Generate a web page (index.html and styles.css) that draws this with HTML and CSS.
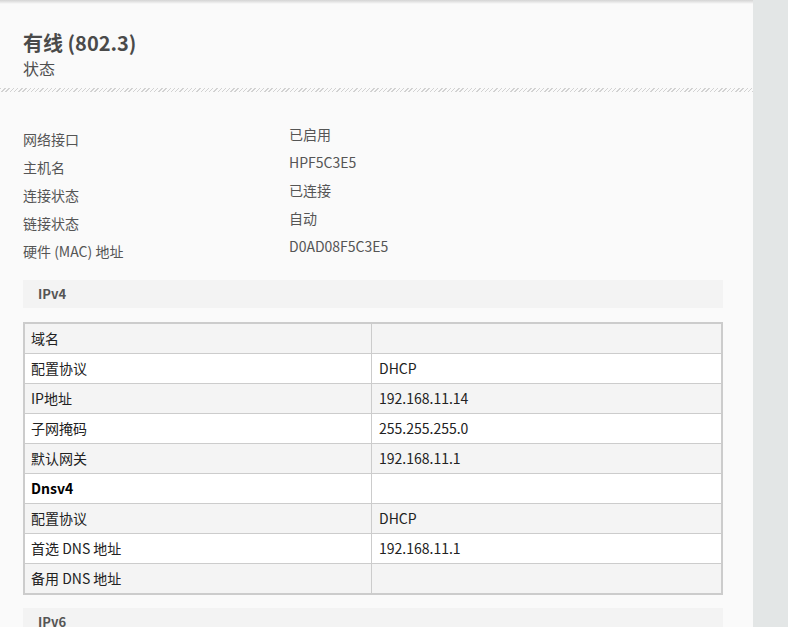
FILE: index.html
```html
<!DOCTYPE html>
<html lang="zh-CN">
<head>
<meta charset="utf-8">
<title>有线 (802.3) 状态</title>
<link rel="stylesheet" href="styles.css">
</head>
<body>
<div class="page">
  <main class="panel">
    <header class="head">
      <h1 class="title">有线 (802.3)</h1>
      <div class="subtitle">状态</div>
    </header>
    <div class="hatch"></div>
    <section class="content">
      <div class="info">
        <div class="info-label">网络接口</div><div class="info-value">已启用</div>
        <div class="info-label">主机名</div><div class="info-value">HPF5C3E5</div>
        <div class="info-label">连接状态</div><div class="info-value">已连接</div>
        <div class="info-label">链接状态</div><div class="info-value">自动</div>
        <div class="info-label">硬件 (MAC) 地址</div><div class="info-value">D0AD08F5C3E5</div>
      </div>

      <div class="bar">IPv4</div>

      <div class="grid-table">
        <div class="row"><div class="cell key">域名</div><div class="cell val"></div></div>
        <div class="row"><div class="cell key">配置协议</div><div class="cell val">DHCP</div></div>
        <div class="row"><div class="cell key">IP地址</div><div class="cell val">192.168.11.14</div></div>
        <div class="row"><div class="cell key">子网掩码</div><div class="cell val">255.255.255.0</div></div>
        <div class="row"><div class="cell key">默认网关</div><div class="cell val">192.168.11.1</div></div>
        <div class="row"><div class="cell key strong">Dnsv4</div><div class="cell val"></div></div>
        <div class="row"><div class="cell key">配置协议</div><div class="cell val">DHCP</div></div>
        <div class="row"><div class="cell key">首选 DNS 地址</div><div class="cell val">192.168.11.1</div></div>
        <div class="row"><div class="cell key">备用 DNS 地址</div><div class="cell val"></div></div>
      </div>

      <div class="bar bar-next">IPv6</div>
    </section>
  </main>
  <aside class="side"></aside>
</div>
</body>
</html>
```

FILE: styles.css
```css
html, body {
  margin: 0;
  padding: 0;
  height: 100%;
  overflow: hidden;
}

body {
  background: #e3e6e6;
  font-family: "Noto Sans CJK SC", "Noto Sans", sans-serif;
  font-size: 14px;
  color: #555;
}

.page {
  display: flex;
  height: 100%;
}

.panel {
  width: 753px;
  flex: none;
  background: #fafafa;
  background-image: linear-gradient(to bottom, #d4d4d4 0, #e6e6e6 2px, #fafafa 4px);
  background-repeat: no-repeat;
  background-size: 100% 4px;
  background-color: #fafafa;
}

.side {
  flex: 1;
  background: #e3e6e6;
}

.head {
  padding: 31px 23px 0;
}

.title {
  margin: 0;
  font-size: 20px;
  line-height: 24px;
  font-weight: 700;
  color: #4a4a4a;
}

.subtitle {
  margin-top: 3px;
  font-size: 16px;
  line-height: 20px;
  color: #4f4f4f;
}

.hatch {
  margin-top: 10px;
  height: 4px;
  background: repeating-linear-gradient(-45deg, #d2d2d2 0 1px, #fafafa 1px 3px);
}

.content {
  padding: 32px 30px 0 23px;
}

.info {
  display: grid;
  grid-template-columns: 266px 1fr;
  grid-auto-rows: 28px;
}

.info-label {
  padding-top: 5px;
  line-height: 20px;
  color: #555;
}

.info-value {
  line-height: 20px;
  color: #555;
}

.bar {
  margin-top: 16px;
  height: 28px;
  line-height: 28px;
  padding-left: 15px;
  background: #f3f3f3;
  font-size: 13px;
  font-weight: 700;
  color: #555;
}

.bar-next {
  margin-top: 13px;
}

.grid-table {
  margin-top: 14px;
  border: 2px solid #cccccc;
  color: #222;
}

.row {
  display: grid;
  grid-template-columns: 347px 1fr;
  height: 29px;
  background: #f4f4f4;
}

.row + .row {
  border-top: 1px solid #cccccc;
}

.row:nth-child(even) {
  background: #ffffff;
}

.cell {
  line-height: 29px;
  white-space: nowrap;
}

.key {
  padding-left: 6px;
  border-right: 1px solid #cccccc;
}

.val {
  padding-left: 7px;
}

.strong {
  font-weight: 700;
  color: #000;
}
```
